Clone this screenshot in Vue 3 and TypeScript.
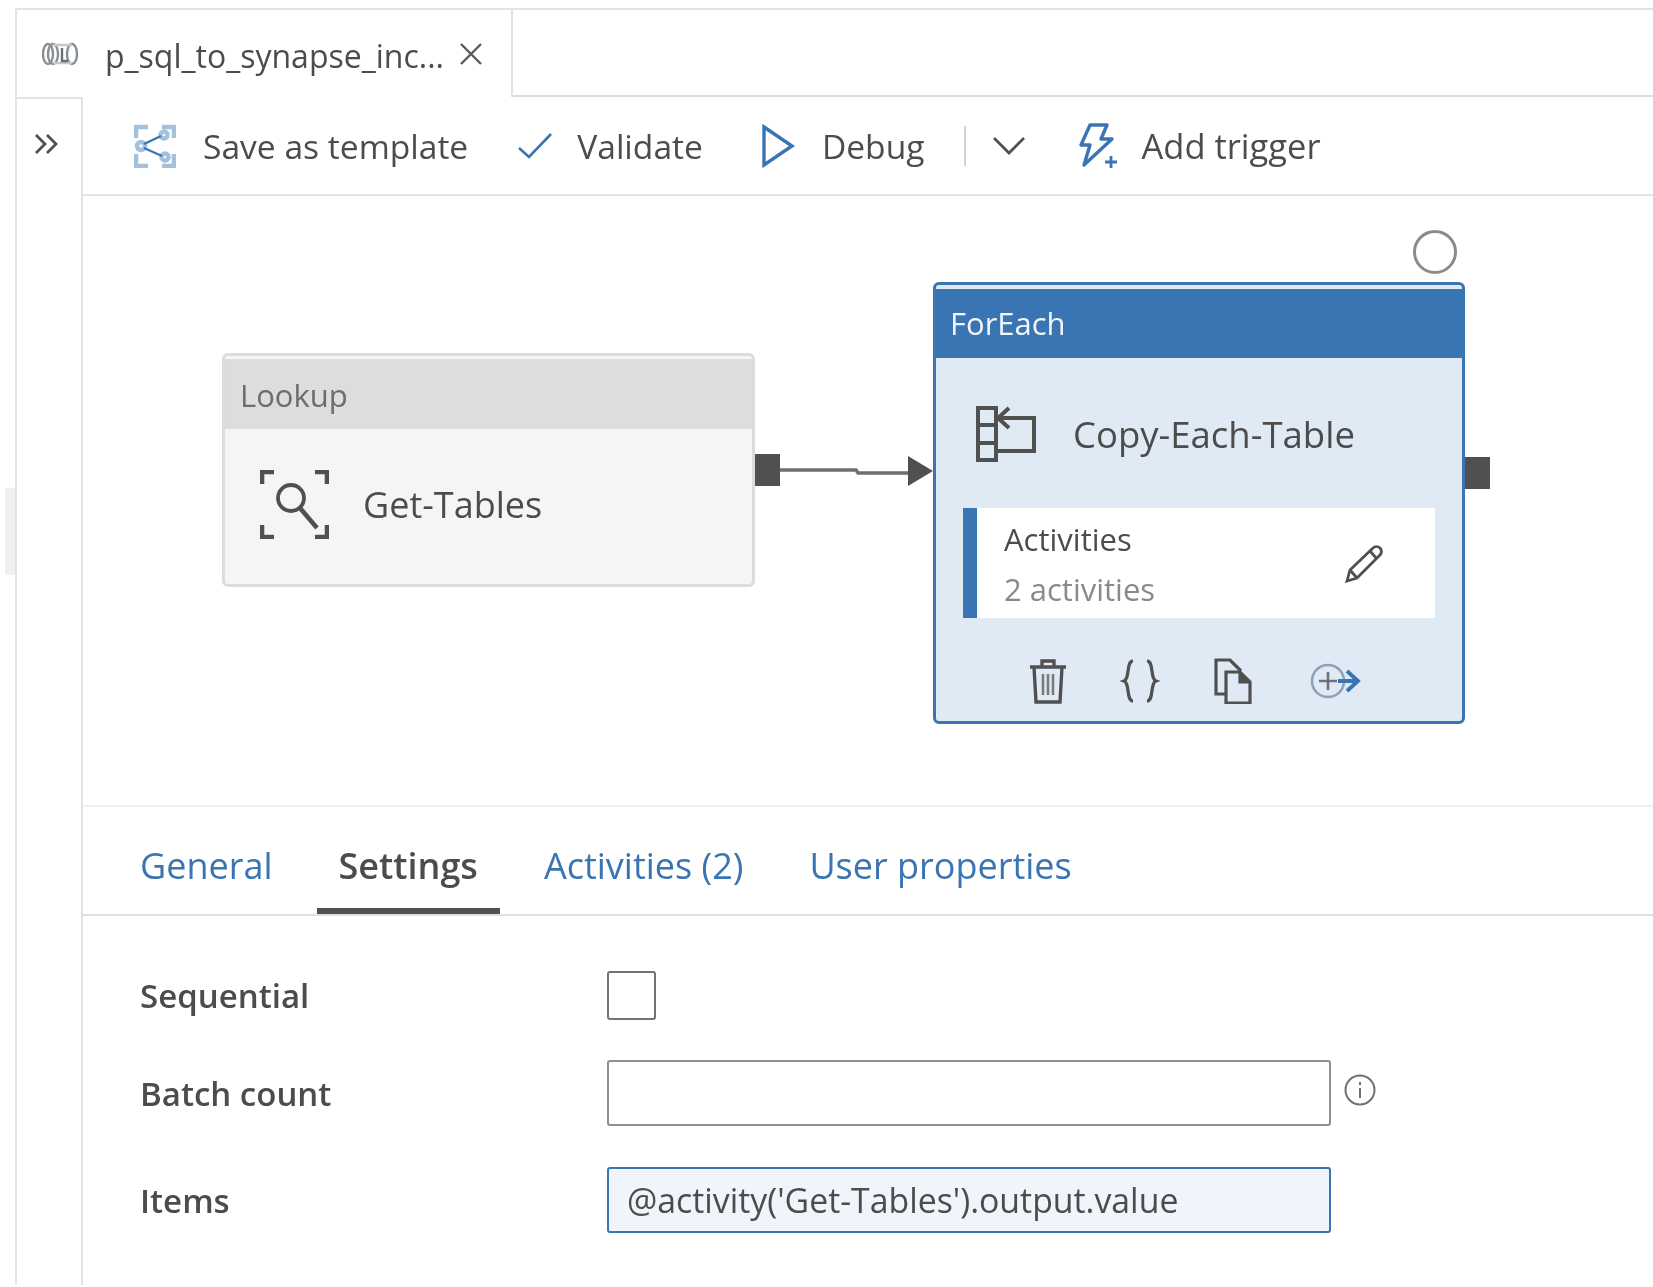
<script setup lang="ts">
import { ref } from 'vue';

const tabs = ['General', 'Settings', 'Activities (2)', 'User properties'];
const activeTab = ref('Settings');
const itemsExpr = ref("@activity('Get-Tables').output.value");
</script>

<template>
  <div class="page">
    <div class="handle"></div>
    <div class="frame">
      <div class="tabstrip">
        <div class="doc-tab">
          <svg class="doc-icon" width="36" height="24" viewBox="0 0 36 24" fill="none" stroke="#8a8f96" stroke-width="2.4">
            <ellipse cx="6" cy="12" rx="5" ry="10" />
            <ellipse cx="11" cy="12" rx="5" ry="10" />
            <ellipse cx="30" cy="12" rx="5" ry="10" />
            <path d="M11 3h19M11 21h19" stroke="#c4c7cb" />
            <path d="M20 6v13h6" stroke="#6b6f74" />
          </svg>
          <span class="doc-title">p_sql_to_synapse_inc...</span>
          <svg class="doc-close" width="24" height="24" viewBox="0 0 24 24" stroke="#5a5a5a" stroke-width="2.4">
            <path d="M2 2l20 20M22 2L2 22" />
          </svg>
        </div>
        <div class="tab-rest"></div>
      </div>

      <div class="workspace">
        <aside class="rail">
          <svg width="24" height="20" viewBox="0 0 24 20" fill="none" stroke="#505050" stroke-width="2.8">
            <path d="M2 1l9 9-9 9M13 1l9 9-9 9" />
          </svg>
        </aside>

        <main class="main">
          <div class="toolbar">
            <button type="button" class="tool tool--save">
              <svg width="42" height="44" viewBox="0 0 42 44" fill="none">
                <g stroke="#a3c0dc" stroke-width="4.5">
                  <path d="M14 3H2v11M28 3h12v11M2 30v12h12M40 30v12H28" />
                  <circle cx="7" cy="22" r="4" />
                  <circle cx="30" cy="11" r="3.5" />
                  <circle cx="31" cy="33" r="3.5" />
                </g>
                <path d="M10 20l17-8M10 24l18 8" stroke="#3a75b3" stroke-width="2.4" />
              </svg>
              <span>Save as template</span>
            </button>
            <button type="button" class="tool tool--validate">
              <svg width="34" height="26" viewBox="0 0 34 26" fill="none" stroke="#3a75b3" stroke-width="2.6">
                <path d="M1 15l10 9L33 1" />
              </svg>
              <span>Validate</span>
            </button>
            <button type="button" class="tool tool--debug">
              <svg width="33" height="44" viewBox="0 0 33 44" fill="none" stroke="#3a75b3" stroke-width="3.4">
                <path d="M2 3l28 19L2 41z" />
              </svg>
              <span>Debug</span>
            </button>
            <span class="tool-sep"></span>
            <svg class="tool-chevron" width="34" height="20" viewBox="0 0 34 20" fill="none" stroke="#505050" stroke-width="2.8">
              <path d="M2 2l15 15L32 2" />
            </svg>
            <button type="button" class="tool tool--trigger">
              <svg width="40" height="46" viewBox="0 0 40 46" fill="none" stroke="#3a75b3" stroke-width="3.4">
                <path d="M11 2h17l-6 14h11L5 42l6-20H2z" stroke-linejoin="round" />
                <path d="M32 33v12M26 39h12" stroke-width="2.8" />
              </svg>
              <span>Add trigger</span>
            </button>
          </div>

          <div class="canvas">
            <svg class="connector" width="160" height="34" viewBox="0 0 160 34" fill="none">
              <path d="M0 16h76l2 3h54" stroke="#6f706e" stroke-width="3.4" />
              <path d="M128 2l25 15-25 15z" fill="#50514f" />
            </svg>
            <div class="port port--lookup"></div>
            <div class="port port--foreach"></div>
            <div class="status-dot"></div>

            <div class="node node--lookup">
              <div class="node__head">Lookup</div>
              <div class="node__body">
                <svg width="69" height="69" viewBox="0 0 69 69" fill="none" stroke="#505050">
                  <path d="M14 2H2v12M55 2h12v12M2 55v12h12M67 55v12H55" stroke-width="4.6" />
                  <circle cx="31" cy="28" r="13" stroke-width="3.8" />
                  <path d="M40 38l17 20" stroke-width="4.6" />
                </svg>
                <span>Get-Tables</span>
              </div>
            </div>

            <div class="node node--foreach">
              <div class="node__head">ForEach</div>
              <div class="node__body">
                <svg width="60" height="56" viewBox="0 0 60 56" fill="none" stroke="#505050" stroke-width="4">
                  <rect x="2" y="2" width="18" height="52" />
                  <path d="M2 19h18M2 37h18" />
                  <path d="M22 12h36v33H20" />
                  <path d="M33 2L22 12l11 10" />
                </svg>
                <span>Copy-Each-Table</span>
              </div>
              <div class="inner">
                <div class="inner__text">
                  <div class="inner__title">Activities</div>
                  <div class="inner__count">2 activities</div>
                </div>
                <svg width="38" height="38" viewBox="0 0 38 38" fill="none" stroke="#505050" stroke-width="2.8">
                  <path d="M2 36l3-11L28 3a4 4 0 0 1 7 7L12 33z" />
                  <path d="M5 25l7 8M25 6l7 8" />
                </svg>
              </div>
              <div class="node__actions">
                <svg width="38" height="46" viewBox="0 0 38 46" fill="none" stroke="#505050" stroke-width="3.4">
                  <path d="M1 9h36M13 9V3h12v6M5 9l2 35h24l2-35" />
                  <path d="M14 16v21M19 16v21M24 16v21" stroke="#7b7b7b" stroke-width="2.6" />
                </svg>
                <svg class="action-braces" width="40" height="44" viewBox="0 0 36 44" fill="none" stroke="#505050" stroke-width="3.2">
                  <path d="M11 2c-7 0-3 18-9 20 6 2 2 20 9 20M25 2c7 0 3 18 9 20-6 2-2 20-9 20" />
                </svg>
                <svg class="action-copy" width="40" height="46" viewBox="0 0 38 46" fill="none" stroke="#505050" stroke-width="3.2">
                  <path d="M12 36H2V2h14l11 11" />
                  <path d="M12 14h14l10 10v21H12z" />
                  <path d="M26 14v10h10" fill="#505050" />
                </svg>
                <svg class="action-add" width="52" height="36" viewBox="0 0 50 36" fill="none">
                  <circle cx="18" cy="18" r="16" stroke="#8da3b8" stroke-width="2.6" />
                  <path d="M18 9v18M9 18h18" stroke="#6b7178" stroke-width="2.6" />
                  <path d="M28 18h19M37 8l11 10-11 10" stroke="#3a75b3" stroke-width="3.8" />
                </svg>
              </div>
            </div>
          </div>

          <div class="panel">
            <nav class="panel-tabs">
              <button
                v-for="tab in tabs"
                :key="tab"
                type="button"
                class="panel-tab"
                :class="{ 'panel-tab--active': tab === activeTab }"
                @click="activeTab = tab"
              >
                {{ tab }}
              </button>
            </nav>

            <div class="form">
              <div class="form__row form__row--sequential">
                <label class="form__label" for="f-seq">Sequential</label>
                <input id="f-seq" type="checkbox" class="form__check" />
              </div>
              <div class="form__row form__row--batch">
                <label class="form__label" for="f-batch">Batch count</label>
                <input id="f-batch" type="text" class="form__input" />
                <svg class="form__info" width="32" height="32" viewBox="0 0 32 32" fill="none" stroke="#6c7177" stroke-width="2">
                  <circle cx="16" cy="16" r="14.5" />
                  <path d="M16 14v10M16 8v3" />
                </svg>
              </div>
              <div class="form__row form__row--items">
                <label class="form__label" for="f-items">Items</label>
                <input id="f-items" v-model="itemsExpr" type="text" class="form__input form__input--focus" />
              </div>
            </div>
          </div>
        </main>
      </div>
    </div>
  </div>
</template>

<style>
html,
body {
  margin: 0;
  background: #ffffff;
}
</style>

<style scoped>
.page {
  position: relative;
  box-sizing: border-box;
  width: 1653px;
  height: 1287px;
  padding: 8px 0 4px 15px;
  overflow: hidden;
  font-family: "Open Sans", "Noto Sans", sans-serif;
  color: #4c4c4c;
  background: #ffffff;
  filter: blur(0.6px);
}

.handle {
  position: absolute;
  left: 5px;
  top: 488px;
  width: 10px;
  height: 87px;
  background: #f0f0f0;
}

.frame {
  display: flex;
  flex-direction: column;
  height: 100%;
  border-top: 2px solid #e2e2e2;
  border-left: 2px solid #e2e4e8;
}

.tabstrip {
  display: flex;
  height: 87px;
  flex: none;
}

.doc-tab {
  display: flex;
  align-items: center;
  box-sizing: border-box;
  width: 496px;
  padding: 0 28px 0 25px;
  border-right: 2px solid #e2e2e2;
}

.doc-icon {
  flex: none;
}

.doc-title {
  margin: 4px 0 0 27px;
  font-size: 32px;
  white-space: nowrap;
}

.doc-close {
  flex: none;
  margin-left: auto;
}

.tab-rest {
  flex: 1;
  border-bottom: 2px solid #dddddd;
}

.workspace {
  display: flex;
  flex: 1;
  min-height: 0;
}

.rail {
  box-sizing: border-box;
  flex: none;
  width: 66px;
  padding: 35px 0 0 17px;
  border-top: 2px solid #e2e2e2;
  border-right: 2px solid #dfe3e8;
}

.main {
  display: flex;
  flex: 1;
  flex-direction: column;
  min-width: 0;
}

.toolbar {
  display: flex;
  align-items: center;
  box-sizing: border-box;
  flex: none;
  height: 99px;
  padding: 0 0 0 51px;
  border-bottom: 2px solid #e4e4e4;
}

.tool {
  display: flex;
  align-items: center;
  padding: 0;
  border: none;
  background: none;
  font: inherit;
  font-size: 33.6px;
  color: #4c4c4c;
}

.tool--save {
  gap: 27px;
}

.tool--validate {
  gap: 25px;
  margin-left: 50px;
}

.tool--debug {
  gap: 27px;
  margin-left: 59px;
}

.tool-sep {
  flex: none;
  width: 2px;
  height: 40px;
  margin-left: 40px;
  background: #c9d4e0;
}

.tool-chevron {
  flex: none;
  margin-left: 26px;
}

.tool--trigger {
  gap: 22px;
  margin-left: 53px;
  font-size: 34.5px;
}

.canvas {
  position: relative;
  flex: none;
  height: 609px;
}

.connector {
  position: absolute;
  left: 697px;
  top: 258px;
}

.port {
  position: absolute;
  width: 25px;
  height: 32px;
  background: #50514f;
}

.port--lookup {
  left: 672px;
  top: 258px;
}

.port--foreach {
  left: 1382px;
  top: 261px;
}

.status-dot {
  position: absolute;
  left: 1330px;
  top: 34px;
  box-sizing: border-box;
  width: 44px;
  height: 44px;
  border: 3.5px solid #8c8a86;
  border-radius: 50%;
}

.node {
  position: absolute;
  box-sizing: border-box;
  width: 533px;
  overflow: hidden;
  border-radius: 6px;
}

.node__head {
  font-size: 31px;
}

.node--lookup {
  left: 139px;
  top: 157px;
  height: 234px;
  border: 3px solid #dcdcdc;
  background: #f5f5f5;
}

.node--lookup .node__head {
  box-sizing: border-box;
  height: 70px;
  margin-top: 3px;
  padding: 15px 0 0 15px;
  background: #dedddc;
  color: #6d6d6d;
}

.node--lookup .node__body {
  display: flex;
  align-items: center;
  gap: 34px;
  padding: 41px 0 0 35px;
  font-size: 36px;
}

.node--foreach {
  left: 850px;
  top: 86px;
  width: 532px;
  height: 442px;
  border: 3px solid #3a75b3;
  background: #dfeaf5;
}

.node--foreach .node__head {
  box-sizing: border-box;
  height: 69px;
  margin-top: 4px;
  padding: 13px 0 0 14px;
  background: #3a75b3;
  color: #f2f6fa;
}

.node--foreach .node__body {
  display: flex;
  align-items: center;
  gap: 37px;
  padding: 48px 0 0 40px;
  font-size: 36.5px;
}

.inner {
  display: flex;
  align-items: center;
  justify-content: space-between;
  box-sizing: border-box;
  height: 110px;
  margin: 46px 27px 0 27px;
  padding: 1px 52px 0 27px;
  border-left: 14px solid #3a75b3;
  background: #ffffff;
}

.inner__title {
  font-size: 31px;
  line-height: 50px;
}

.inner__count {
  font-size: 31px;
  line-height: 50px;
  color: #8a8a8a;
}

.node__actions {
  display: flex;
  align-items: center;
  padding: 40px 0 0 93px;
}

.action-braces {
  margin-left: 53px;
}

.action-copy {
  margin-left: 53px;
}

.action-add {
  margin-left: 56px;
}

.panel {
  flex: 1;
  border-top: 2px solid #f0f0f0;
}

.panel-tabs {
  display: flex;
  gap: 22px;
  box-sizing: border-box;
  height: 109px;
  padding-left: 35px;
  border-bottom: 2px solid #e0e0e0;
}

.panel-tab {
  box-sizing: border-box;
  height: 107px;
  padding: 16px 22px 0;
  border: none;
  border-bottom: 6px solid transparent;
  background: none;
  font: inherit;
  font-size: 36px;
  color: #3a75b3;
}

.panel-tab--active {
  border-bottom-color: #50514f;
  font-weight: 600;
  color: #4c4c4c;
}

.form {
  display: flex;
  flex-direction: column;
  padding: 55px 0 0 57px;
}

.form__row {
  display: grid;
  grid-template-columns: 467px 724px auto;
  align-items: center;
}

.form__row--batch {
  margin-top: 40px;
}

.form__row--items {
  margin-top: 41px;
}

.form__label {
  font-size: 33px;
  font-weight: 600;
}

.form__check {
  box-sizing: border-box;
  width: 49px;
  height: 49px;
  margin: 0;
  border: 2px solid #737373;
  border-radius: 3px;
  appearance: none;
  background: #ffffff;
}

.form__input {
  box-sizing: border-box;
  width: 724px;
  height: 66px;
  padding: 0 18px;
  border: 2px solid #8f8f8f;
  border-radius: 3px;
  outline: none;
  font: inherit;
  font-size: 33.8px;
  color: #4c4c4c;
}

.form__input--focus {
  border-color: #3a75b3;
  background: #eff5fb;
}

.form__info {
  margin: -6px 0 0 13px;
}
</style>
